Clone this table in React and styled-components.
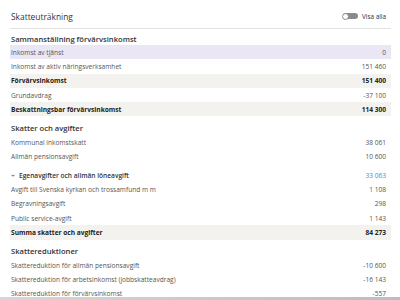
import React, { useState } from 'react';
import styled, { createGlobalStyle } from 'styled-components';

const GlobalStyle = createGlobalStyle`
  html, body {
    margin: 0;
    padding: 0;
    background: #ffffff;
    overflow: hidden;
  }
  body {
    font-family: "Open Sans", "Liberation Sans", sans-serif;
    color: #333333;
  }
`;

// Data for the tax calculation
const sections = [
  {
    title: 'Sammanställning förvärvsinkomst',
    rows: [
      { label: 'Inkomst av tjänst', value: '0', highlight: true },
      { label: 'Inkomst av aktiv näringsverksamhet', value: '151 460' },
      { label: 'Förvärvsinkomst', value: '151 400', total: true },
      { label: 'Grundavdrag', value: '-37 100' },
      { label: 'Beskattningsbar förvärvsinkomst', value: '114 300', total: true },
    ],
  },
  {
    title: 'Skatter och avgifter',
    rows: [
      { label: 'Kommunal inkomstskatt', value: '38 061' },
      { label: 'Allmän pensionsavgift', value: '10 600' },
      { label: 'Egenavgifter och allmän löneavgift', value: '33 063', expandable: true },
      { label: 'Avgift till Svenska kyrkan och trossamfund m m', value: '1 108' },
      { label: 'Begravningsavgift', value: '298' },
      { label: 'Public service-avgift', value: '1 143' },
      { label: 'Summa skatter och avgifter', value: '84 273', total: true },
    ],
  },
  {
    title: 'Skattereduktioner',
    rows: [
      { label: 'Skattereduktion för allmän pensionsavgift', value: '-10 600' },
      { label: 'Skattereduktion för arbetsinkomst (jobbskatteavdrag)', value: '-16 143' },
      { label: 'Skattereduktion för förvärvsinkomst', value: '-557' },
    ],
  },
];

const Page = styled.div`
  padding: 0 9px 0 10px;
`;

const Header = styled.div`
  height: 29px;
  display: flex;
  align-items: center;
  justify-content: space-between;
  border-bottom: 1px solid #e2e2e2;
  padding: 4px 5px 0 1px;
  box-sizing: border-box;
`;

const Title = styled.h1`
  margin: 0;
  font-size: 8.4px;
  font-weight: 400;
  color: #333333;
`;

const ToggleWrap = styled.label`
  display: flex;
  align-items: center;
  gap: 4px;
  font-size: 6.4px;
  color: #333333;
  cursor: pointer;
`;

const Track = styled.span`
  position: relative;
  width: 15px;
  height: 6px;
  border-radius: 3px;
  background: ${(p) => (p.$on ? '#6b4fa8' : '#8a8a8a')};
`;

const Knob = styled.span`
  position: absolute;
  top: -0.5px;
  left: ${(p) => (p.$on ? '8px' : '-0.5px')};
  width: 7px;
  height: 7px;
  border-radius: 50%;
  background: #ffffff;
  border: 0.5px solid #8a8a8a;
  box-sizing: border-box;
`;

const SectionTitle = styled.div`
  height: ${(p) => (p.$first ? '16px' : '18.5px')};
  display: flex;
  align-items: center;
  padding: 4px 1px 0;
  box-sizing: border-box;
  font-size: 7.6px;
  font-weight: 600;
  color: #333333;
`;

const Row = styled.div`
  height: 14.3px;
  display: flex;
  align-items: center;
  justify-content: space-between;
  padding: 0 5px 0 1px;
  margin-top: ${(p) => (p.$expandable ? '4.5px' : '0')};
  font-size: 6.6px;
  font-weight: ${(p) => (p.$total ? 700 : 400)};
  color: ${(p) => (p.$total ? '#222222' : '#555555')};
  background: ${(p) => (p.$highlight ? '#ebe6f6' : p.$total ? '#f3f2ef' : 'transparent')};
`;

const Label = styled.span`
  display: flex;
  align-items: center;
  gap: 4px;
  font-weight: ${(p) => (p.$expandable ? 600 : 'inherit')};
  color: ${(p) => (p.$expandable ? '#333333' : 'inherit')};
`;

const Value = styled.span`
  color: ${(p) => (p.$link ? '#3d8fd1' : 'inherit')};
`;

const BottomShade = styled.div`
  position: fixed;
  left: 0;
  right: 0;
  bottom: 0;
  height: 3px;
  background: linear-gradient(to right, #d6d6d6, #bdbdbd);
`;

const Chevron = () => (
  <svg width="4" height="3" viewBox="0 0 8 6">
    <path d="M1 1.5 L4 4.5 L7 1.5" fill="none" stroke="#333" strokeWidth="1.6" />
  </svg>
);

const App = () => {
  const [showAll, setShowAll] = useState(false);

  return (
    <Page>
      <GlobalStyle />
      <Header>
        <Title>Skatteuträkning</Title>
        <ToggleWrap onClick={() => setShowAll(!showAll)}>
          <Track $on={showAll}>
            <Knob $on={showAll} />
          </Track>
          Visa alla
        </ToggleWrap>
      </Header>

      {sections.map((section, i) => (
        <div key={section.title}>
          <SectionTitle $first={i === 0}>{section.title}</SectionTitle>
          {section.rows.map((row) => (
            <Row
              key={row.label}
              $total={row.total}
              $highlight={row.highlight}
              $expandable={row.expandable}
            >
              <Label $expandable={row.expandable}>
                {row.expandable && <Chevron />}
                {row.label}
              </Label>
              <Value $link={row.expandable}>{row.value}</Value>
            </Row>
          ))}
        </div>
      ))}
      <BottomShade />
    </Page>
  );
};

export default App;
